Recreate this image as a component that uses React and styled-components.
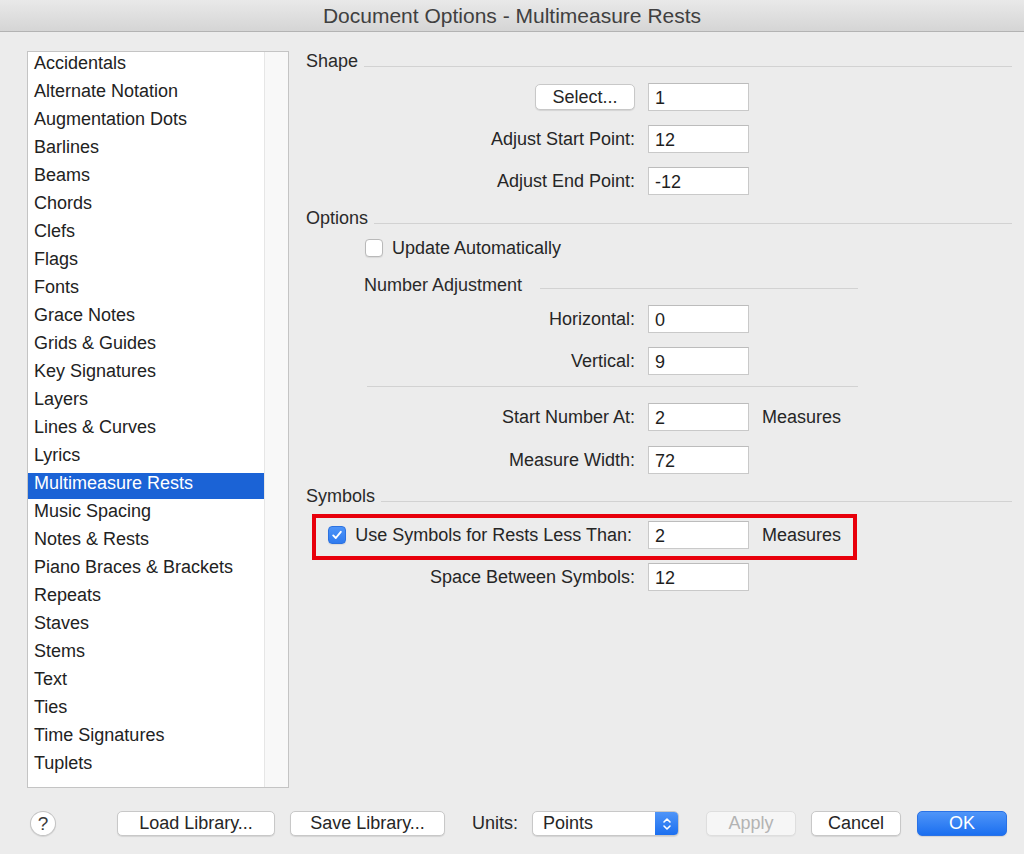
import React from 'react';
import styled, { createGlobalStyle } from 'styled-components';

const GlobalStyle = createGlobalStyle`
  html, body {
    margin: 0;
    padding: 0;
    background: #ececec;
  }
  * {
    box-sizing: border-box;
  }
`;

const categories = [
  'Accidentals',
  'Alternate Notation',
  'Augmentation Dots',
  'Barlines',
  'Beams',
  'Chords',
  'Clefs',
  'Flags',
  'Fonts',
  'Grace Notes',
  'Grids & Guides',
  'Key Signatures',
  'Layers',
  'Lines & Curves',
  'Lyrics',
  'Multimeasure Rests',
  'Music Spacing',
  'Notes & Rests',
  'Piano Braces & Brackets',
  'Repeats',
  'Staves',
  'Stems',
  'Text',
  'Ties',
  'Time Signatures',
  'Tuplets',
];

const SELECTED = 'Multimeasure Rests';

const Check = () => (
  <svg width="12" height="12" viewBox="0 0 12 12">
    <path d="M2.2 6.4 L4.8 9 L9.8 2.8" fill="none" stroke="#fff" strokeWidth="1.9" strokeLinecap="round" strokeLinejoin="round" />
  </svg>
);

const Stepper = () => (
  <svg width="10" height="16" viewBox="0 0 10 16">
    <path d="M2 6 L5 3 L8 6" fill="none" stroke="#fff" strokeWidth="1.6" strokeLinecap="round" strokeLinejoin="round" />
    <path d="M2 10 L5 13 L8 10" fill="none" stroke="#fff" strokeWidth="1.6" strokeLinecap="round" strokeLinejoin="round" />
  </svg>
);

export default function App() {
  return (
    <>
      <GlobalStyle />
      <Window>
        <TitleBar>Document Options - Multimeasure Rests</TitleBar>

        <Main>
          <ListBox>
            <ListItems>
              {categories.map(c => (
                <ListRow key={c} $selected={c === SELECTED}>{c}</ListRow>
              ))}
            </ListItems>
            <ScrollTrack />
          </ListBox>

          <Panel>
            <SectionHeader>
              <span>Shape</span>
              <Rule />
            </SectionHeader>

            <Field $mt={12}>
              <Label><PushButton $w={100} $h={26}>Select...</PushButton></Label>
              <TextField>1</TextField>
            </Field>
            <Field $mt={14}>
              <Label>Adjust Start Point:</Label>
              <TextField>12</TextField>
            </Field>
            <Field $mt={14}>
              <Label>Adjust End Point:</Label>
              <TextField>-12</TextField>
            </Field>

            <SectionHeader $mt={13}>
              <span>Options</span>
              <Rule />
            </SectionHeader>

            <CheckRow $mt={10} $ml={59}>
              <CheckBox />
              <span>Update Automatically</span>
            </CheckRow>

            <SectionHeader $mt={17} $ml={58} $width={494}>
              <span>Number Adjustment</span>
              <Rule $sub />
            </SectionHeader>

            <Field $mt={10}>
              <Label>Horizontal:</Label>
              <TextField>0</TextField>
            </Field>
            <Field $mt={14}>
              <Label>Vertical:</Label>
              <TextField>9</TextField>
            </Field>

            <Divider />

            <Field $mt={16}>
              <Label>Start Number At:</Label>
              <TextField>2</TextField>
              <Unit>Measures</Unit>
            </Field>
            <Field $mt={15}>
              <Label>Measure Width:</Label>
              <TextField>72</TextField>
            </Field>

            <SectionHeader $mt={12}>
              <span>Symbols</span>
              <Rule />
            </SectionHeader>

            <Highlight>
              <Field>
                <Label $w={316}>
                  <CheckBox $checked><Check /></CheckBox>
                  <span>Use Symbols for Rests Less Than:</span>
                </Label>
                <TextField $ml={16}>2</TextField>
                <Unit>Measures</Unit>
              </Field>
            </Highlight>

            <Field $mt={3}>
              <Label>Space Between Symbols:</Label>
              <TextField>12</TextField>
            </Field>
          </Panel>
        </Main>

        <Footer>
          <HelpButton>?</HelpButton>
          <PushButton $w={158} $ml={61}>Load Library...</PushButton>
          <PushButton $w={155} $ml={15}>Save Library...</PushButton>
          <FooterLabel>Units:</FooterLabel>
          <PopUp>
            <span>Points</span>
            <PopUpArrows><Stepper /></PopUpArrows>
          </PopUp>
          <PushButton $w={90} $ml={27} $disabled>Apply</PushButton>
          <PushButton $w={90} $ml={15}>Cancel</PushButton>
          <PushButton $w={90} $ml={16} $primary>OK</PushButton>
        </Footer>
      </Window>
    </>
  );
}

const Window = styled.div`
  width: 1024px;
  height: 854px;
  background: #ececec;
  display: flex;
  flex-direction: column;
  font-family: "Liberation Sans", Arial, sans-serif;
  font-size: 18px;
  color: #262626;
  overflow: hidden;
`;

const TitleBar = styled.div`
  height: 32px;
  line-height: 31px;
  text-align: center;
  font-size: 21px;
  color: #404040;
  background: linear-gradient(#e9e9e9, #d5d5d5);
  border-bottom: 1px solid #b3b3b3;
`;

const Main = styled.div`
  display: flex;
  padding: 19px 12px 0 27px;
`;

const ListBox = styled.div`
  width: 262px;
  height: 737px;
  border: 1px solid #c4c4c4;
  background: #fff;
  display: flex;
`;

const ListItems = styled.div`
  flex: 1;
  padding-top: 1px;
`;

const ListRow = styled.div`
  height: 26px;
  margin-bottom: 2px;
  padding-left: 6px;
  line-height: 20px;
  white-space: nowrap;
  color: ${props => props.$selected ? '#fff' : '#222'};
  background: ${props => props.$selected ? '#1b63d6' : 'transparent'};
`;

const ScrollTrack = styled.div`
  width: 24px;
  background: #f8f8f8;
  border-left: 1px solid #e6e6e6;
`;

const Panel = styled.div`
  flex: 1;
  margin-left: 17px;
  display: flex;
  flex-direction: column;
`;

const SectionHeader = styled.div`
  display: flex;
  align-items: flex-start;
  height: 20px;
  line-height: 20px;
  margin-top: ${props => props.$mt || 0}px;
  margin-left: ${props => props.$ml || 0}px;
  width: ${props => props.$width ? `${props.$width}px` : 'auto'};
  color: #2a2a2a;
`;

const Rule = styled.div`
  flex: 1;
  margin-left: ${props => props.$sub ? 18 : 6}px;
  margin-top: ${props => props.$sub ? 13 : 15}px;
  border-top: 1px solid #d2d2d2;
`;

const Divider = styled.div`
  margin: 11px 0 0 61px;
  width: 491px;
  border-top: 1px solid #d2d2d2;
`;

const Field = styled.div`
  display: flex;
  align-items: center;
  height: 28px;
  margin-top: ${props => props.$mt || 0}px;
`;

const Label = styled.div`
  width: ${props => props.$w || 329}px;
  display: flex;
  align-items: center;
  justify-content: flex-end;
  gap: 9px;
  line-height: 28px;
  white-space: nowrap;
`;

const TextField = styled.div`
  width: 101px;
  height: 28px;
  margin-left: ${props => props.$ml || 13}px;
  padding-left: 6px;
  line-height: 28px;
  background: #fff;
  border: 1px solid #c9c9c9;
  border-top-color: #bcbcbc;
  color: #1e1e1e;
`;

const Unit = styled.span`
  margin-left: 13px;
  line-height: 28px;
`;

const CheckRow = styled.div`
  display: flex;
  align-items: center;
  gap: 9px;
  height: 20px;
  line-height: 20px;
  margin-top: ${props => props.$mt || 0}px;
  margin-left: ${props => props.$ml || 0}px;
`;

const CheckBox = styled.span`
  width: 18px;
  height: 18px;
  border-radius: 4px;
  display: inline-flex;
  align-items: center;
  justify-content: center;
  flex-shrink: 0;
  background: ${props => props.$checked ? 'linear-gradient(#4d94f8, #2f7bef)' : '#fff'};
  border: 1px solid ${props => props.$checked ? '#2c72e0' : '#b9b9b9'};
  box-shadow: 0 1px 1px rgba(0, 0, 0, 0.08);
`;

const Highlight = styled.div`
  margin: 8px 0 0 6px;
  width: 545px;
  border: 4px solid #e8000b;
  padding: 3px 0 7px 0;
`;

const Footer = styled.div`
  display: flex;
  align-items: center;
  padding: 23px 0 0 30px;
`;

const HelpButton = styled.div`
  width: 26px;
  height: 25px;
  border-radius: 50%;
  background: #fff;
  border: 1px solid #c3c3c3;
  box-shadow: 0 1px 1px rgba(0, 0, 0, 0.1);
  display: flex;
  align-items: center;
  justify-content: center;
  font-size: 19px;
  color: #3a3a3a;
`;

const PushButton = styled.div`
  width: ${props => props.$w}px;
  height: ${props => props.$h || 25}px;
  margin-left: ${props => props.$ml || 0}px;
  border-radius: 5px;
  display: flex;
  align-items: center;
  justify-content: center;
  white-space: nowrap;
  background: ${props =>
    props.$primary ? 'linear-gradient(#4f95f8, #1b6ff0)'
      : props.$disabled ? '#f6f6f6' : '#fff'};
  border: 1px solid ${props =>
    props.$primary ? '#2a72e6'
      : props.$disabled ? '#dedede' : '#c8c8c8'};
  color: ${props =>
    props.$primary ? '#fff'
      : props.$disabled ? '#b3b3b3' : '#262626'};
  box-shadow: 0 1px 1px rgba(0, 0, 0, ${props => props.$disabled ? 0.04 : 0.1});
`;

const FooterLabel = styled.span`
  margin-left: 27px;
`;

const PopUp = styled.div`
  width: 147px;
  height: 25px;
  margin-left: 14px;
  border-radius: 5px;
  background: #fff;
  border: 1px solid #c8c8c8;
  box-shadow: 0 1px 1px rgba(0, 0, 0, 0.1);
  display: flex;
  align-items: center;
  justify-content: space-between;
  padding-left: 10px;
  overflow: hidden;
`;

const PopUpArrows = styled.div`
  width: 23px;
  height: 100%;
  background: linear-gradient(#4f95f8, #1b6ff0);
  display: flex;
  align-items: center;
  justify-content: center;
`;
